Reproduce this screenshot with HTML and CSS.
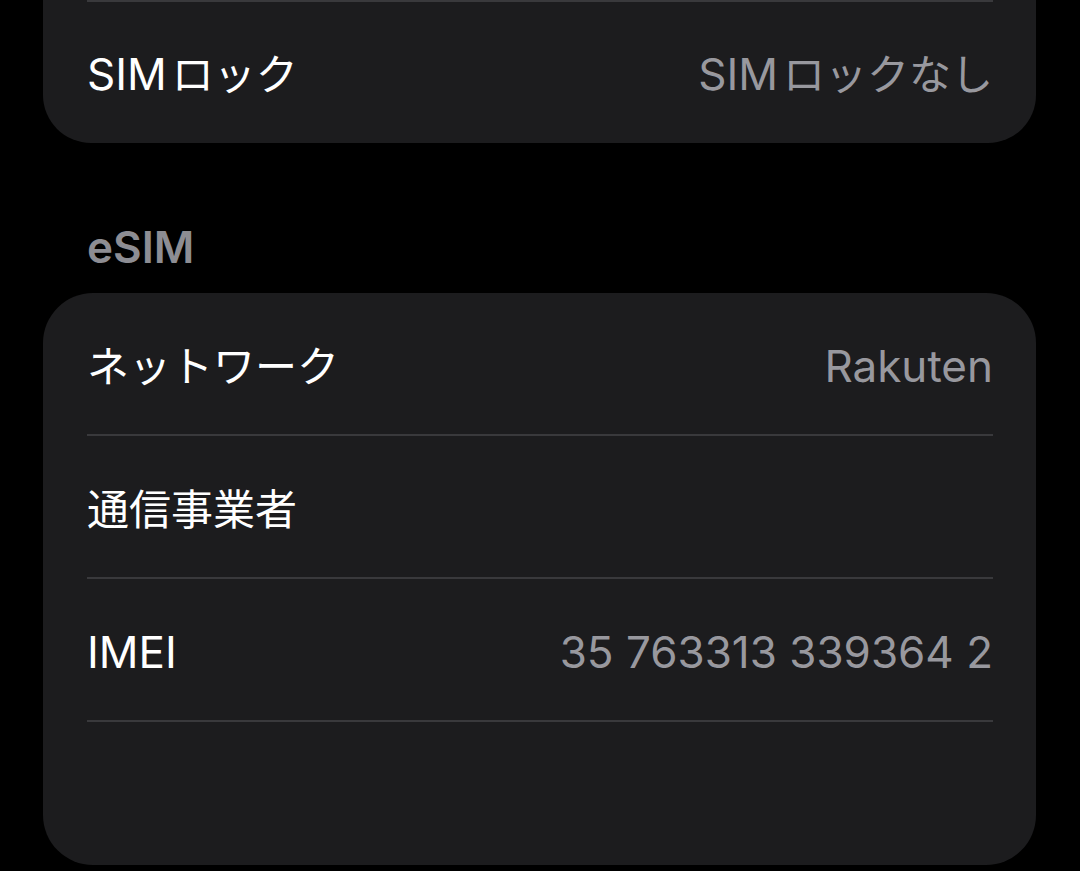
FILE: index.html
```html
<!DOCTYPE html>
<html lang="ja">
<head>
<meta charset="utf-8">
<title>eSIM</title>
<link rel="stylesheet" href="styles.css">
</head>
<body>
<div class="page">
  <div class="card card-cut">
    <div class="row row-top">
      <span class="label">SIM<span class="ja gap">ロック</span></span>
      <span class="value">SIM<span class="ja gap">ロックなし</span></span>
    </div>
  </div>

  <div class="section-header">eSIM</div>

  <div class="card">
    <div class="row sep">
      <span class="label"><span class="ja">ネットワーク</span></span>
      <span class="value">Rakuten</span>
    </div>
    <div class="row sep">
      <span class="label"><span class="ja">通信事業者</span></span>
      <span class="value"></span>
    </div>
    <div class="row sep">
      <span class="label">IMEI</span>
      <span class="value">35 763313 339364 2</span>
    </div>
    <div class="row empty"></div>
  </div>
</div>
</body>
</html>
```

FILE: styles.css
```css
html, body {
  margin: 0;
  padding: 0;
  background: #000;
}

body {
  font-family: Inter, "Noto Sans CJK JP", "Noto Sans", sans-serif;
  color: #fff;
  -webkit-font-smoothing: antialiased;
}

.page {
  padding: 0 44px 0 43px;
}

.card {
  background: #1c1c1e;
  border-radius: 50px;
  overflow: hidden;
}

.card-cut {
  border-radius: 0 0 48px 48px;
}

.row {
  height: 141px;
  margin: 0 43px 0 44px;
  display: flex;
  align-items: center;
  justify-content: space-between;
  font-size: 44px;
  line-height: 1;
  padding-top: 4px;
  box-sizing: border-box;
}

.row-top {
  border-top: 2px solid #39393c;
  height: 143px;
  padding-top: 2px;
}

.sep {
  border-bottom: 2px solid #39393c;
  height: 143px;
}

.row.empty {
  height: 143px;
}

.label {
  color: #fff;
}

.value {
  color: #98989e;
}

.ja {
  font-family: "Noto Sans CJK JP", sans-serif;
  font-size: 42px;
  font-weight: 400;
}

.gap {
  margin-left: 5px;
}

.section-header {
  height: 150px;
  box-sizing: border-box;
  display: flex;
  align-items: flex-end;
  padding: 0 0 19px 44px;
  font-size: 44px;
  font-weight: 600;
  line-height: 1.2;
  color: #8d8d93;
}
```
